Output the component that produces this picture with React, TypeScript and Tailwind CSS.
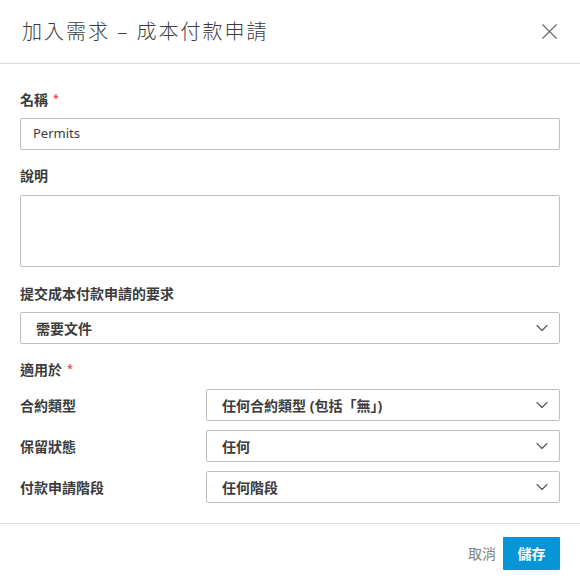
import { ChevronDown, X } from "lucide-react";

const font = { fontFamily: '"Noto Sans", "Noto Sans CJK TC", sans-serif' };

function Label({ text, required }: { text: string; required?: boolean }) {
  return (
    <div className="flex items-start h-[18px] text-[14px] leading-[18px] font-bold text-[#3c3c3c]">
      {text}
      {required && <span className="ml-[5px] text-[11px] leading-[14px] text-[#e5584f]">*</span>}
    </div>
  );
}

function Select({ value }: { value: string }) {
  return (
    <div className="flex items-center justify-between h-[32px] border border-[#bfbfbf] rounded-[2px] pl-[15px] pr-[7px] bg-white">
      <span className="text-[14px] font-bold text-[#3c3c3c]">{value}</span>
      <ChevronDown className="w-[20px] h-[20px] text-[#555]" strokeWidth={1.3} />
    </div>
  );
}

const rows = [
  { label: "合約類型", value: "任何合約類型 (包括「無」)" },
  { label: "保留狀態", value: "任何" },
  { label: "付款申請階段", value: "任何階段" },
];

export default function App() {
  return (
    <div className="w-[580px] h-[583px] bg-white flex flex-col" style={font}>
      {/* Header */}
      <div className="h-[64px] flex items-center justify-between pl-[22px] pr-[17px] border-b border-[#d9d9d9]">
        <h1 className="text-[20px] font-light tracking-[2px] text-[#3c3c3c]">加入需求 – 成本付款申請</h1>
        <X className="w-[27px] h-[27px] text-[#666]" strokeWidth={1} />
      </div>

      {/* Body */}
      <div className="flex-1 px-[20px] pt-[27px]">
        <Label text="名稱" required />
        <div className="mt-[9px] h-[32px] border border-[#bfbfbf] rounded-[2px] flex items-center pl-[12px] text-[13px] text-[#3c3c3c]">
          Permits
        </div>

        <div className="mt-[17px]">
          <Label text="說明" />
        </div>
        <div className="mt-[10px] h-[72px] border border-[#bfbfbf] rounded-[2px]" />

        <div className="mt-[18px]">
          <Label text="提交成本付款申請的要求" />
        </div>
        <div className="mt-[9px]">
          <Select value="需要文件" />
        </div>

        <div className="mt-[17px]">
          <Label text="適用於" required />
        </div>
        <div className="mt-[10px] flex flex-col gap-[9px]">
          {rows.map((r) => (
            <div key={r.label} className="flex items-center">
              <div className="w-[186px] text-[14px] font-bold text-[#3c3c3c]">{r.label}</div>
              <div className="flex-1">
                <Select value={r.value} />
              </div>
            </div>
          ))}
        </div>
      </div>

      {/* Footer */}
      <div className="h-[60px] border-t border-[#d9d9d9] flex items-center justify-end gap-[7px] px-[20px]">
        <span className="text-[14px] text-[#808080]">取消</span>
        <button className="w-[57px] h-[33px] bg-[#0696d7] text-white text-[14px] font-bold rounded-[1px]">儲存</button>
      </div>
    </div>
  );
}
